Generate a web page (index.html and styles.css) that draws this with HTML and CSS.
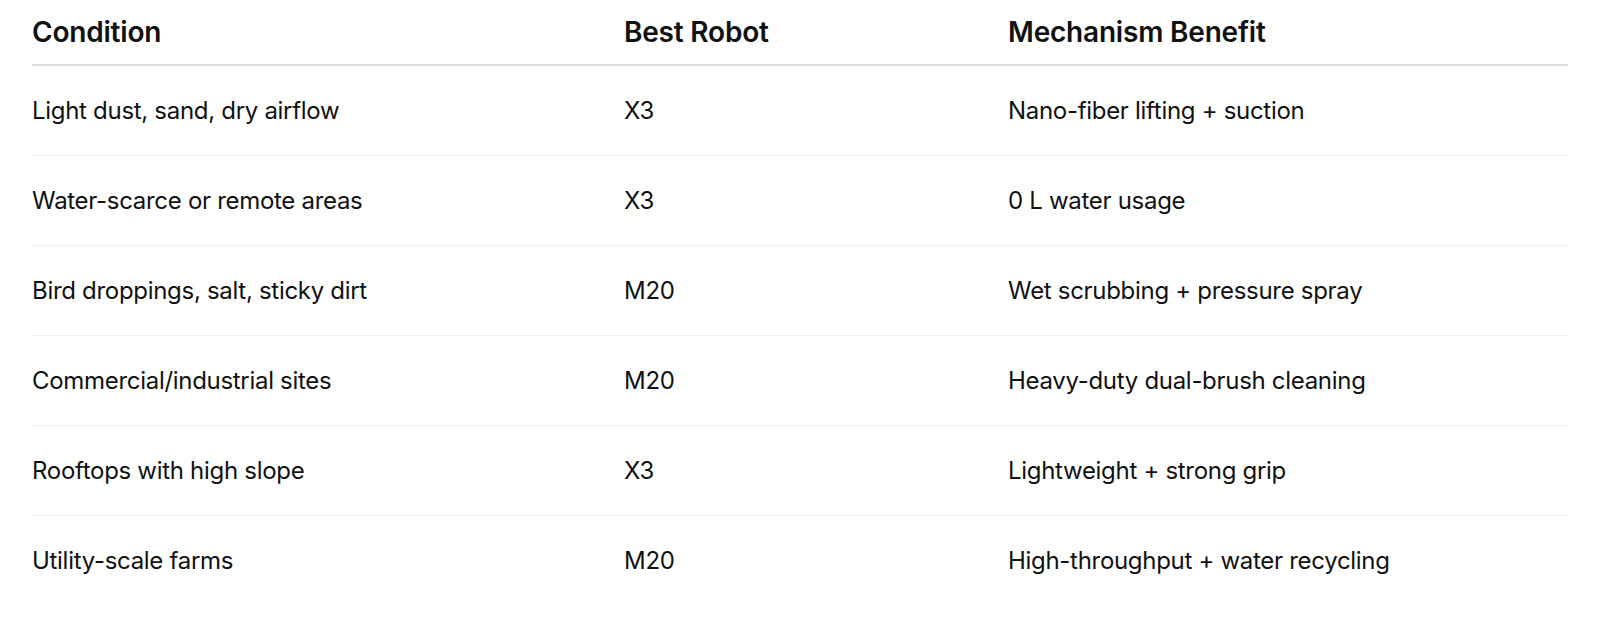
FILE: index.html
```html
<!DOCTYPE html>
<html lang="en">
<head>
<meta charset="utf-8">
<title>Robot comparison</title>
<link rel="stylesheet" href="styles.css">
</head>
<body>
<div class="wrap">
<table class="tbl">
  <colgroup>
    <col class="c1"><col class="c2"><col class="c3">
  </colgroup>
  <thead>
    <tr><th>Condition</th><th>Best Robot</th><th>Mechanism Benefit</th></tr>
  </thead>
  <tbody>
    <tr><td>Light dust, sand, dry airflow</td><td>X3</td><td>Nano-fiber lifting + suction</td></tr>
    <tr><td>Water-scarce or remote areas</td><td>X3</td><td>0 L water usage</td></tr>
    <tr><td>Bird droppings, salt, sticky dirt</td><td>M20</td><td>Wet scrubbing + pressure spray</td></tr>
    <tr><td>Commercial/industrial sites</td><td>M20</td><td>Heavy-duty dual-brush cleaning</td></tr>
    <tr><td>Rooftops with high slope</td><td>X3</td><td>Lightweight + strong grip</td></tr>
    <tr><td>Utility-scale farms</td><td>M20</td><td>High-throughput + water recycling</td></tr>
  </tbody>
</table>
</div>
</body>
</html>
```

FILE: styles.css
```css
html, body {
  margin: 0;
  padding: 0;
  background: #ffffff;
}
body {
  font-family: Inter, "Noto Sans", "Liberation Sans", sans-serif;
  color: #111111;
}
.wrap {
  padding: 0 32px;
}
.tbl {
  width: 100%;
  border-collapse: collapse;
  table-layout: fixed;
}
.c1 { width: 592px; }
.c2 { width: 384px; }
.c3 { width: auto; }
.tbl th {
  text-align: left;
  font-weight: 600;
  font-size: 28px;
  letter-spacing: -0.2px;
  height: 64px;
  padding: 0;
  vertical-align: middle;
  border-bottom: 2px solid #d9d9d9;
}
.tbl td {
  font-size: 24px;
  font-weight: 400;
  letter-spacing: -0.3px;
  height: 89px;
  padding: 0;
  vertical-align: middle;
  border-bottom: 1px solid #efefef;
}
.tbl tbody tr:last-child td {
  border-bottom: none;
}
```
